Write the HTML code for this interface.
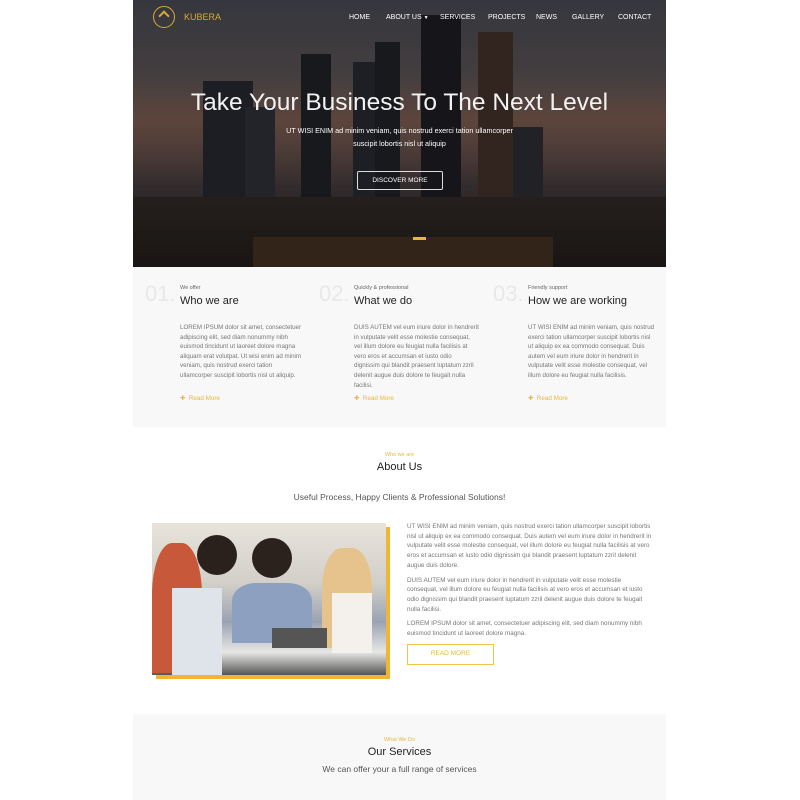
<!DOCTYPE html>
<html><head><meta charset="utf-8"><style>
*{margin:0;padding:0;box-sizing:border-box}
body{width:800px;height:800px;background:#fff;font-family:"Liberation Sans",sans-serif;position:relative;overflow:hidden}
.wrap{position:absolute;left:133px;width:533px;top:0;height:800px;background:#fff}
.hero{position:absolute;left:0;top:0;width:533px;height:267px;background:linear-gradient(180deg,#3d3f47 0%,#4d4748 28%,#6a4f45 45%,#5a4640 55%,#3a3234 70%,#2a2424 85%,#1f1a18 100%);overflow:hidden}
.b{position:absolute;bottom:0;background:#1c1d22}
.t{position:absolute;color:#fff;white-space:nowrap}
.nav{position:absolute;top:13px;font-size:7px;line-height:9px;color:#fff;white-space:nowrap}
.f{position:absolute;top:267px;left:0;width:533px;height:160px;background:#f8f8f8}
.col{position:absolute;top:0}
.num{position:absolute;font-size:22px;color:#e8e8e8;top:14px}
.sm{font-size:5.5px;color:#666;position:absolute;top:18px;white-space:nowrap}
.h{font-size:11px;color:#222;position:absolute;top:28px;white-space:nowrap}
.p{font-size:6.2px;color:#777;line-height:9.6px;position:absolute;top:56px;width:125px}
.rm{position:absolute;top:128px;font-size:6.3px;color:#e5b93b;white-space:nowrap}
</style></head><body>
<div class="wrap">
<div class="hero">
 <div class="b" style="left:70px;width:50px;height:186px;background:#22232a"></div>
 <div class="b" style="left:112px;width:30px;height:160px;background:#28292f"></div>
 <div class="b" style="left:168px;width:30px;height:213px"></div>
 <div class="b" style="left:220px;width:45px;height:205px;background:#23242a"></div>
 <div class="b" style="left:242px;width:25px;height:225px"></div>
 <div class="b" style="left:288px;width:40px;height:252px;background:#18191e"></div>
 <div class="b" style="left:345px;width:35px;height:235px;background:#3a2a24"></div>
 <div class="b" style="left:380px;width:30px;height:140px;background:#26262c"></div>
 <div class="b" style="left:0;width:533px;height:70px;background:linear-gradient(180deg,#2a2422,#1d1917)"></div>
 <div class="b" style="left:120px;width:300px;height:30px;background:#3a2a1c"></div>
 <div style="position:absolute;left:0;top:0;width:533px;height:267px;background:rgba(0,0,0,.12)"></div>
 <div style="position:absolute;left:20px;top:6px;width:22px;height:22px;border:1.5px solid #d9aa3a;border-radius:50%"></div>
 <div style="position:absolute;left:27px;top:12px;width:8px;height:8px;border-left:2px solid #d9aa3a;border-top:2px solid #d9aa3a;transform:rotate(45deg)"></div>
 <div class="t" style="left:51px;top:12px;font-size:9px;color:#d9aa3a">KUBERA</div>
 <div class="nav" style="left:216px">HOME</div>
 <div class="nav" style="left:253px">ABOUT US <span style="font-size:5px">▼</span></div>
 <div class="nav" style="left:307px">SERVICES</div>
 <div class="nav" style="left:355px">PROJECTS</div>
 <div class="nav" style="left:403px">NEWS</div>
 <div class="nav" style="left:439px">GALLERY</div>
 <div class="nav" style="left:485px">CONTACT</div>
 <div class="t" style="left:0;width:533px;text-align:center;top:89px;font-size:24.5px;color:#f2f2f2">Take Your Business To The Next Level</div>
 <div class="t" style="left:0;width:533px;text-align:center;top:125px;font-size:7.2px;line-height:12.5px">UT WISI ENIM ad minim veniam, quis nostrud exerci tation ullamcorper<br>suscipit lobortis nisl ut aliquip</div>
 <div style="position:absolute;left:224px;top:171px;width:86px;height:19px;border:1px solid #ddd;border-radius:2px;color:#fff;font-size:6.5px;text-align:center;line-height:17px">DISCOVER MORE</div>
 <div style="position:absolute;left:280px;top:237px;width:13px;height:3px;background:#e5b93b"></div>
</div>
<div class="f">
 <div class="col" style="left:12px"><div class="num">01.</div><div class="sm" style="left:35px">We offer</div><div class="h" style="left:35px">Who we are</div><div class="p" style="left:35px">LOREM IPSUM dolor sit amet, consectetuer adipiscing elit, sed diam nonummy nibh euismod tincidunt ut laoreet dolore magna aliquam erat volutpat. Ut wisi enim ad minim veniam, quis nostrud exerci tation ullamcorper suscipit lobortis nisl ut aliquip.</div><div class="rm" style="left:35px">✚ &nbsp;Read More</div></div>
 <div class="col" style="left:186px"><div class="num">02.</div><div class="sm" style="left:35px">Quickly &amp; professional</div><div class="h" style="left:35px">What we do</div><div class="p" style="left:35px">DUIS AUTEM vel eum iriure dolor in hendrerit in vulputate velit esse molestie consequat, vel illum dolore eu feugiat nulla facilisis at vero eros et accumsan et iusto odio dignissim qui blandit praesent luptatum zzril delenit augue duis dolore te feugait nulla facilisi.</div><div class="rm" style="left:35px">✚ &nbsp;Read More</div></div>
 <div class="col" style="left:360px"><div class="num">03.</div><div class="sm" style="left:35px">Friendly support</div><div class="h" style="left:35px">How we are working</div><div class="p" style="left:35px;width:128px">UT WISI ENIM ad minim veniam, quis nostrud exerci tation ullamcorper suscipit lobortis nisl ut aliquip ex ea commodo consequat. Duis autem vel eum iriure dolor in hendrerit in vulputate velit esse molestie consequat, vel illum dolore eu feugiat nulla facilisis.</div><div class="rm" style="left:35px">✚ &nbsp;Read More</div></div>
</div>
<div class="t" style="left:0;width:533px;text-align:center;top:452px;font-size:5.5px;color:#e5b93b">Who we are</div>
<div class="t" style="left:0;width:533px;text-align:center;top:461px;font-size:11px;color:#222">About Us</div>
<div class="t" style="left:0;width:533px;text-align:center;top:492px;font-size:8.5px;color:#555">Useful Process, Happy Clients &amp; Professional Solutions!</div>
<div style="position:absolute;left:23px;top:527px;width:234px;height:152px;background:#f2b532"></div>
<div style="position:absolute;left:19px;top:523px;width:234px;height:152px;background:linear-gradient(180deg,#e8e4dc 0%,#d2cfc8 40%,#9aa3b3 65%,#e7e7e5 85%,#555 100%);overflow:hidden">
 <div style="position:absolute;left:0;top:20px;width:50px;height:130px;background:#c7593a;border-radius:40% 40% 0 0"></div>
 <div style="position:absolute;left:20px;top:65px;width:50px;height:90px;background:#dfe4ea"></div>
 <div style="position:absolute;left:45px;top:12px;width:40px;height:40px;background:#2a211d;border-radius:50%"></div>
 <div style="position:absolute;left:100px;top:15px;width:40px;height:40px;background:#2b221e;border-radius:50%"></div>
 <div style="position:absolute;left:80px;top:60px;width:80px;height:60px;background:#8ea0c0;border-radius:30% 30% 0 0"></div>
 <div style="position:absolute;left:170px;top:25px;width:50px;height:100px;background:#e6c38c;border-radius:40% 40% 0 0"></div>
 <div style="position:absolute;left:180px;top:70px;width:40px;height:60px;background:#f4f1ec"></div>
 <div style="position:absolute;left:120px;top:105px;width:55px;height:20px;background:#555"></div>
</div>
<div class="t" style="left:274px;top:522px;font-size:6.3px;line-height:9.7px;color:#777;white-space:normal;width:246px">UT WISI ENIM ad minim veniam, quis nostrud exerci tation ullamcorper suscipit lobortis nisl ut aliquip ex ea commodo consequat. Duis autem vel eum iriure dolor in hendrerit in vulputate velit esse molestie consequat, vel illum dolore eu feugiat nulla facilisis at vero eros et accumsan et iusto odio dignissim qui blandit praesent luptatum zzril delenit augue duis dolore.<div style="height:5px"></div>DUIS AUTEM vel eum iriure dolor in hendrerit in vulputate velit esse molestie consequat, vel illum dolore eu feugiat nulla facilisis at vero eros et accumsan et iusto odio dignissim qui blandit praesent luptatum zzril delenit augue duis dolore te feugait nulla facilisi.<div style="height:5px"></div>LOREM IPSUM dolor sit amet, consectetuer adipiscing elit, sed diam nonummy nibh euismod tincidunt ut laoreet dolore magna.</div>
<div style="position:absolute;left:274px;top:644px;width:87px;height:21px;border:1.5px solid #f2c44a;color:#e5b93b;font-size:6.5px;text-align:center;line-height:18px">READ MORE</div>
<div style="position:absolute;left:0;top:714px;width:533px;height:86px;background:#f8f8f8"></div>
<div class="t" style="left:0;width:533px;text-align:center;top:737px;font-size:5.5px;color:#e5b93b">What We Do</div>
<div class="t" style="left:0;width:533px;text-align:center;top:746px;font-size:11px;color:#222">Our Services</div>
<div class="t" style="left:0;width:533px;text-align:center;top:764px;font-size:8.5px;color:#555">We can offer your a full range of services</div>
</div>
</body></html>
